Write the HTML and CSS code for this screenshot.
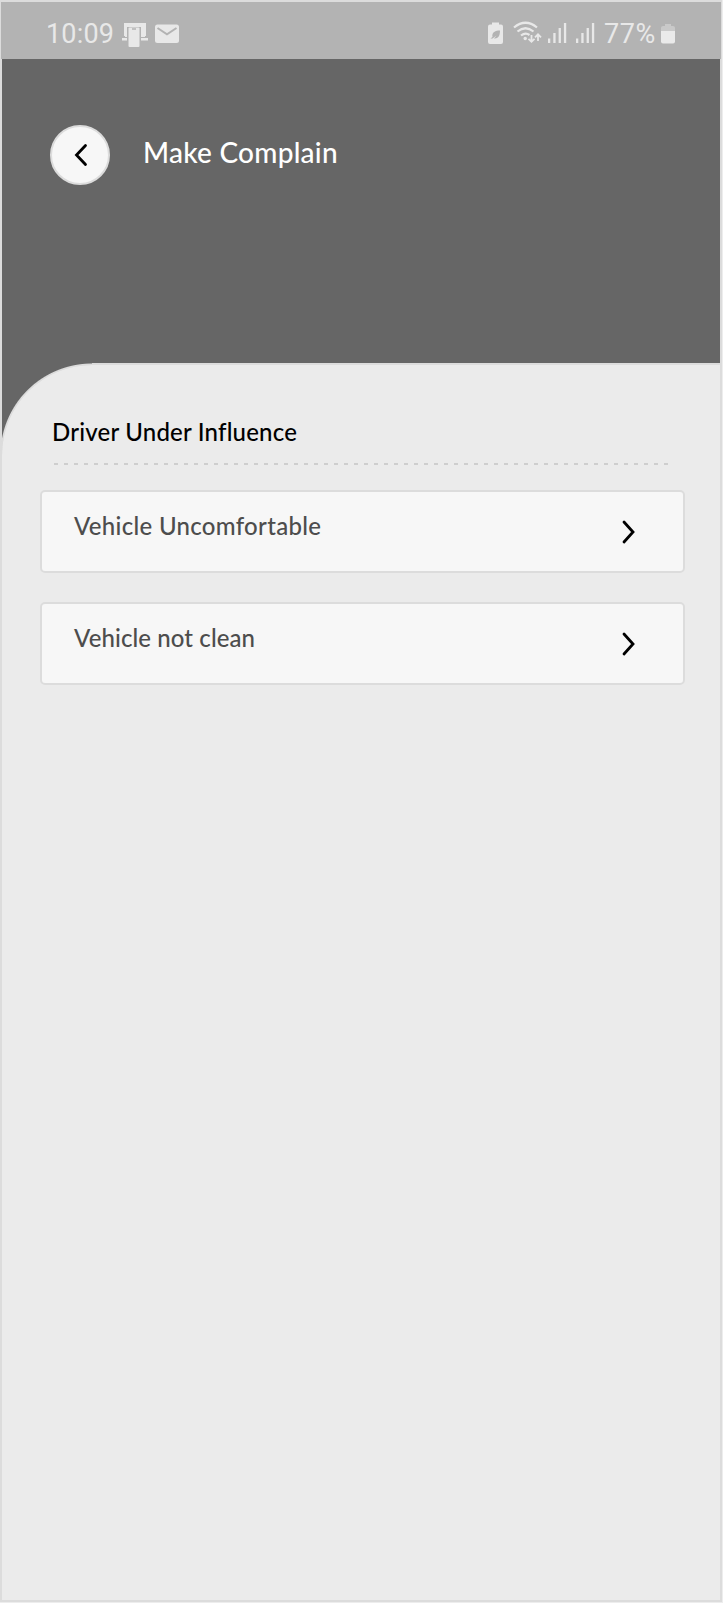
FILE: index.html
```html
<!DOCTYPE html>
<html lang="en">
<head>
<meta charset="utf-8">
<title>Make Complain</title>
<link rel="stylesheet" href="styles.css">
</head>
<body>
<div class="phone">
  <div class="status">
    <span class="time">10:09</span>
    <svg class="notices" width="60" height="26" viewBox="121 22 60 26" fill="#e8e8e8">
      <path d="M124 23h22v13h-2.500V26H126.500v10H124z"/>
      <path d="M125 25h20v12h-20z"/>
      <path d="M122 38h26v2.500h-26z"/>
      <path d="M127 27h14v20h-14z" fill="#b3b3b3"/>
      <rect x="128.500" y="27.500" width="11" height="19.500" rx="1"/>
      <path d="M132 29h4" stroke="#b3b3b3" stroke-width="1.500"/>
      <rect x="155" y="24.500" width="24" height="18.500" rx="2.500"/>
      <path d="M157.500 28l9.500 6.300 9.500-6.300" fill="none" stroke="#b3b3b3" stroke-width="2"/>
    </svg>
    <svg class="signals" width="108" height="26" viewBox="489 20 108 26" fill="#e8e8e8">
      <path d="M493 22.500h7v2h2q2 0 2 2V42q0 2-2 2h-11q-2 0-2-2V26.500q0-2 2-2h2z"/>
      <path d="M491.500 38.500l2-1.500c-1-5 3-6.500 7.500-6.500 0 4-1 8.500-6 8l2.500-3-4 3z" fill="#b3b3b3"/>
      <g fill="none" stroke="#e8e8e8" stroke-width="2.200">
        <path d="M515 27.500q11.500-9.500 23 0"/>
        <path d="M518.500 31.500q8-6.500 16 0"/>
        <path d="M522 35.500q4.500-3.500 8.500-.5"/>
      </g>
      <circle cx="526.200" cy="38.500" r="1.700"/>
      <path d="M532.500 35v6M529.500 38.800l3 3 3-3M539 41v-6M536 37.300l3-3 3 3" fill="none" stroke="#e8e8e8" stroke-width="1.800"/>
      <path d="M549 38.500h2.300V43H549zM554.300 33h2.300v10h-2.300zM559.600 28h2.300v15h-2.300zM564.900 23h2.300v20h-2.300zM577 38.500h2.300V43H577zM582.300 33h2.300v10h-2.300zM587.600 28h2.300v15h-2.300zM592.900 23h2.300v20h-2.300z"/>
    </svg>
    <span class="percent">77%</span>
    <svg class="battery" width="14" height="20" viewBox="0 0 14 20">
      <path d="M4 0h6v2h2q2 0 2 2v4H0V4q0-2 2-2h2z" fill="#c9c9c9"/>
      <path d="M0 7h14v10.500q0 2-2 2H2q-2 0-2-2z" fill="#eaeaea"/>
    </svg>
  </div>
  <header class="header">
    <button class="back" aria-label="Back">
      <svg width="14" height="24" viewBox="0 0 14 24"><path d="M11.500 2.500L2.500 12l9 9.500"/></svg>
    </button>
    <h1 class="title">Make Complain</h1>
  </header>
  <main class="panel">
    <h2 class="subject">Driver Under Influence</h2>
    <div class="divider"></div>
    <ul class="options">
      <li class="option">
        <span class="label label-long">Vehicle Uncomfortable</span>
        <svg class="chevron" width="14" height="24" viewBox="0 0 14 24"><path d="M2 2l9 10-9 10"/></svg>
      </li>
      <li class="option">
        <span class="label label-short">Vehicle not clean</span>
        <svg class="chevron" width="14" height="24" viewBox="0 0 14 24"><path d="M2 2l9 10-9 10"/></svg>
      </li>
    </ul>
  </main>
</div>
</body>
</html>
```
FILE: styles.css
```css
* { box-sizing: border-box; }
body { margin: 0; background: #ededed; }
.phone {
  width: 722px;
  height: 1602px;
  display: flex;
  flex-direction: column;
  border-top: 2px solid #dcdcdc;
  background: #dcdcdc;
  font-family: Lato, sans-serif;
}
.status {
  flex: none;
  height: 57px;
  margin: 0 1px;
  padding-left: 45px;
  display: flex;
  background: #b3b3b3;
  color: #e8e8e8;
  font-family: Roboto, sans-serif;
  font-size: 27px;
  line-height: 32px;
  padding-top: 16px;
}
.time { width: 75px; letter-spacing: 0.2px; }
.notices { margin-top: 4px; }
.signals { margin: 2px 0 0 307px; }
.percent { width: 56px; margin-left: 8px; letter-spacing: 0.6px; }
.battery { margin: 6px 0 0 1px; }
.header {
  flex: none;
  height: 304px;
  margin: 0 2px;
  padding: 66px 0 0 48px;
  display: flex;
  background: #666;
}
.back {
  width: 60px;
  height: 60px;
  padding: 0 0 0 2px;
  display: flex;
  align-items: center;
  justify-content: center;
  border: 2px solid #dcdcdc;
  border-radius: 50%;
  background: #f7f7f7;
}
.back path, .chevron path {
  fill: none;
  stroke: #000;
  stroke-width: 2.8;
  stroke-linecap: round;
  stroke-linejoin: miter;
}
.title {
  margin: 9px 0 0 33px;
  color: #fff;
  font-size: 28px;
  font-weight: 500;
  line-height: 36px;
  letter-spacing: 0.25px;
}
.panel {
  flex: 1;
  padding: 51px 35px 0 38px;
  border: 2px solid #dcdcdc;
  border-radius: 92px 0 0 0;
  background: #ebebeb;
  background-clip: padding-box;
  position: relative;
}
.panel::before {
  content: "";
  position: absolute;
  left: 0;
  top: -2px;
  width: 90px;
  height: 92px;
  background: radial-gradient(circle at 90px 92px, transparent 91px, #666 92px);
}
.subject {
  margin: 0 0 0 12px;
  color: #000;
  font-size: 24px;
  font-weight: 500;
  line-height: 32px;
  letter-spacing: 0.2px;
}
.divider {
  width: 615px;
  height: 2px;
  margin: 15px 0 0 14px;
  background: repeating-linear-gradient(90deg, #cecece 0 4px, transparent 4px 10px);
}
.options {
  margin: 24.500px 0 0;
  padding: 0;
  display: grid;
  gap: 29px;
  list-style: none;
}
.option {
  height: 83px;
  padding: 0 47px 0 32px;
  display: flex;
  justify-content: space-between;
  border: 2px solid #dcdcdc;
  border-radius: 5px;
  background: #f7f7f7;
}
.label {
  margin-top: 18px;
  color: #4d4d4d;
  font-size: 24px;
  font-weight: 500;
  line-height: 32px;
}
.label-long { letter-spacing: 0.3px; }
.label-short { letter-spacing: 0.1px; }
.chevron { margin-top: 28px; }
```
